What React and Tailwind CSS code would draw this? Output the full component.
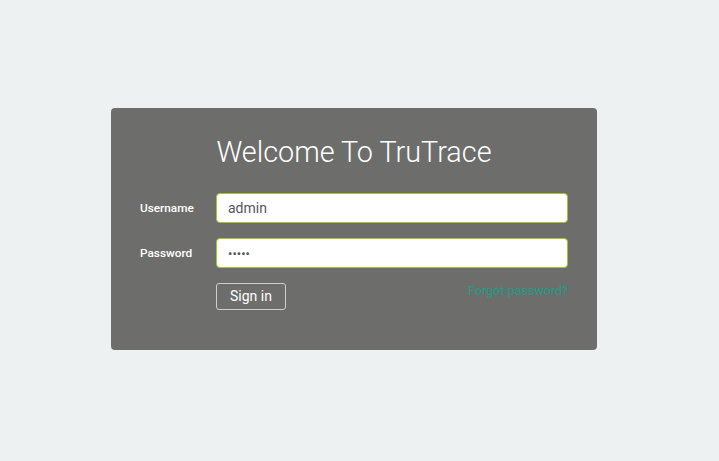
import React from "react";

export default function App() {
  return (
    <div className="min-h-[461px] w-full bg-[#eef1f2] pt-[108px] font-['Roboto',sans-serif]">
      <div className="ml-[111px] w-[486px] h-[242px] rounded-[4px] bg-[#6d6e6c] px-[29px] pt-[27px]">
        {/* Title */}
        <h1 className="text-center text-[28.8px] font-light leading-[34px] text-white">
          Welcome To TruTrace
        </h1>

        <form className="mt-[24px] flex flex-col gap-[15px]">
          <div className="flex items-center">
            <label className="w-[76px] pt-[1px] text-[11.8px] font-medium text-white">Username</label>
            <input
              readOnly
              value="admin"
              className="h-[30px] flex-1 rounded-[4px] border border-[#a3c62a] bg-white px-[11px] text-[14px] text-[#555] outline-none"
            />
          </div>
          <div className="flex items-center">
            <label className="w-[76px] pt-[1px] text-[11.8px] font-medium text-white">Password</label>
            <input
              readOnly
              type="password"
              value="admin"
              className="h-[30px] flex-1 rounded-[4px] border border-[#a3c62a] bg-white px-[11px] text-[13px] text-[#555] outline-none"
            />
          </div>
          <div className="flex items-start justify-between pl-[76px]">
            <button
              type="button"
              className="h-[27px] w-[70px] rounded-[3px] border border-[#cfcfcf] text-[14px] text-white"
            >
              Sign in
            </button>
            <a href="#" className="mt-[-1px] text-[12.5px] text-[#1d9c86]">
              Forgot password?
            </a>
          </div>
        </form>
      </div>
    </div>
  );
}
